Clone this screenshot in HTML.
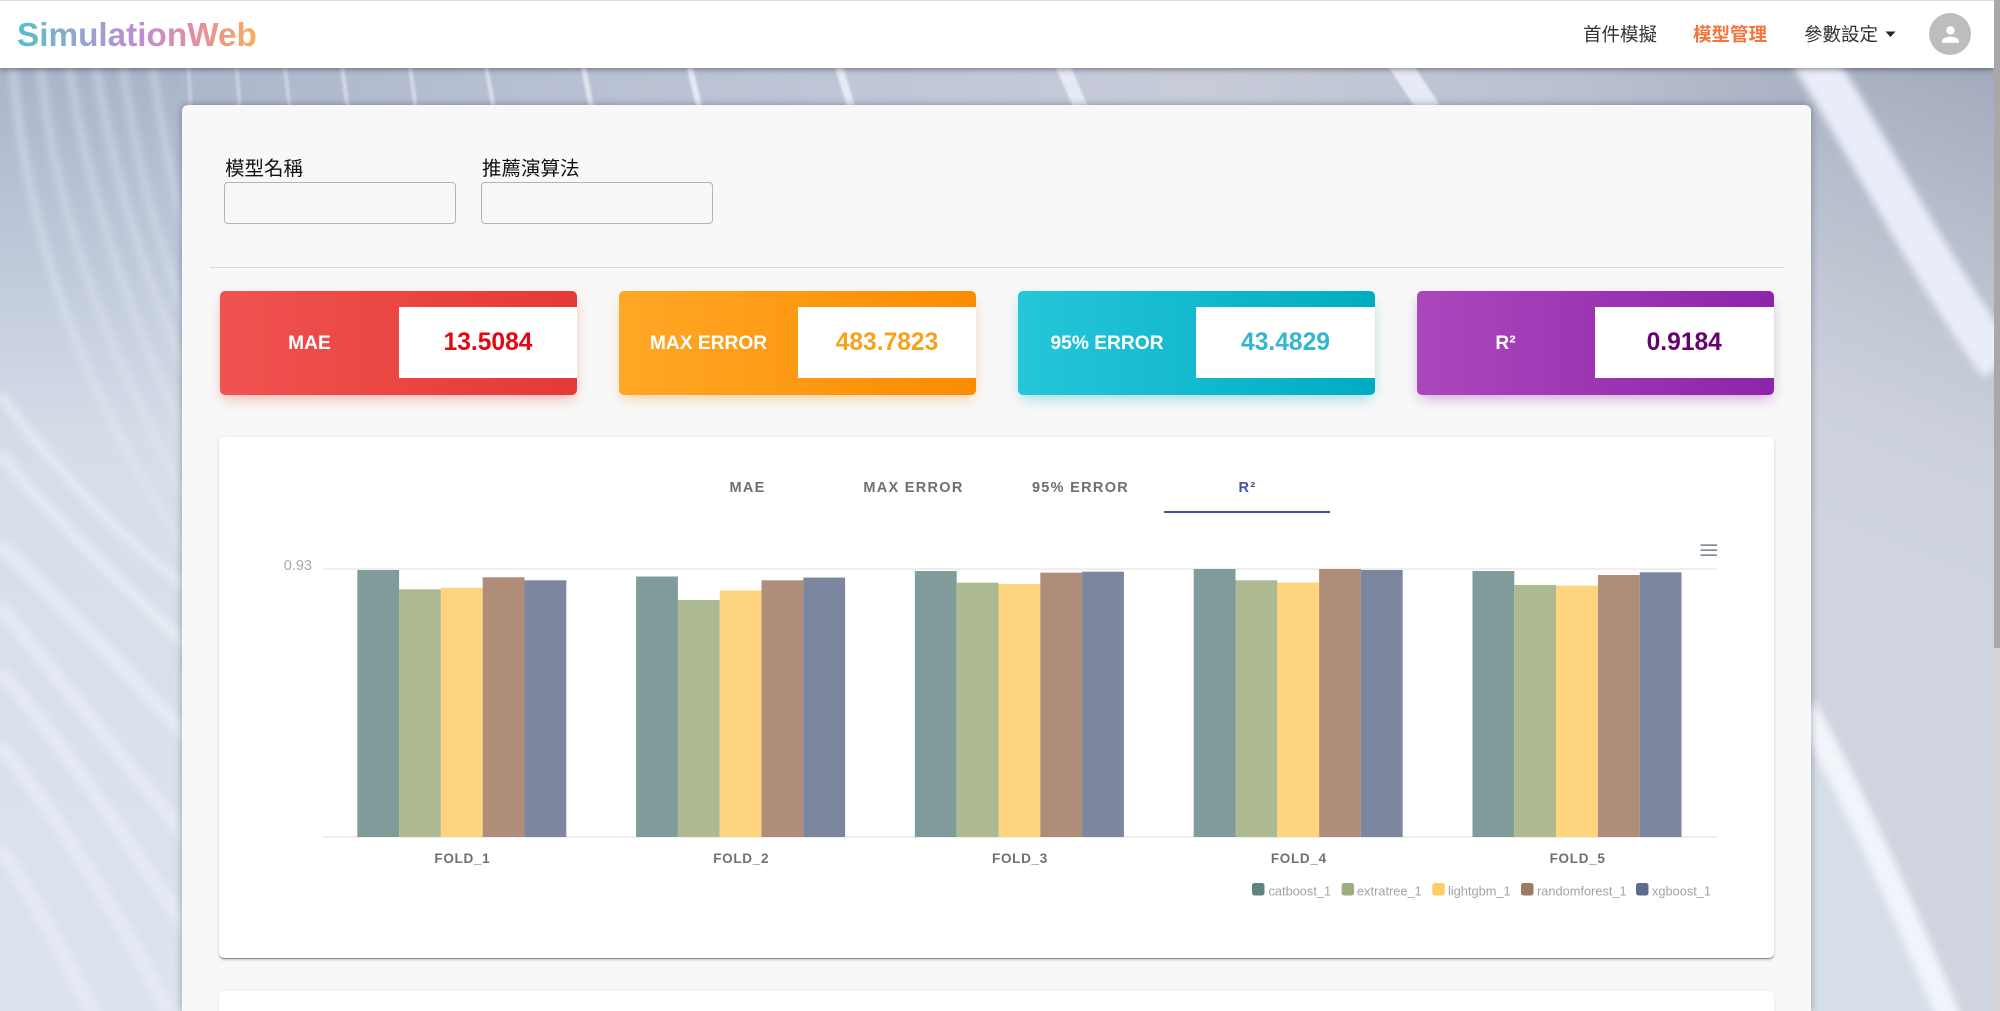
<!DOCTYPE html>
<html lang="zh-Hant">
<head>
<meta charset="utf-8">
<title>SimulationWeb</title>
<style>
html,body{margin:0;padding:0;width:2000px;height:1011px;overflow:hidden;background:#cfd5e0;font-family:"Liberation Sans","Noto Sans CJK TC",sans-serif}
#root{position:absolute;left:0;top:0;width:2000px;height:1011px;overflow:hidden}
#bg{position:absolute;left:0;top:0}
.abs{position:absolute}
.nav{position:absolute;left:0;top:0;width:1994px;height:68px;background:#fff;border-top:1px solid #dcdcdc;box-sizing:border-box;box-shadow:0 1px 6px rgba(0,0,0,.45)}
.logo{position:absolute;left:17px;top:16px;font-size:33.3px;line-height:38px;font-weight:700;white-space:nowrap;background:linear-gradient(90deg,#54bfc7 0%,#8ea9cc 22%,#bb8ed2 50%,#e78d9c 75%,#f6ae5c 100%);-webkit-background-clip:text;background-clip:text;color:transparent}
.ni{position:absolute;top:20px;font-size:18.5px;line-height:28px;color:#333;white-space:nowrap}
.scroll{position:absolute;left:1994px;top:0;width:6px;height:1011px;background:#d6d6d6}
.thumb{position:absolute;left:0;top:0;width:6px;height:648px;background:#a8a8a8}
.main{position:absolute;left:182px;top:105px;width:1629px;height:906px;background:#f8f8f8;border-radius:6px 6px 0 0;box-shadow:0 0 8px rgba(30,35,60,.38)}
.lbl{position:absolute;top:154.5px;font-size:19.5px;line-height:28px;color:#111;white-space:nowrap}
.inp{position:absolute;top:182px;width:232px;height:42px;box-sizing:border-box;border:1px solid #b4b4b4;border-radius:4px;background:#f8f8f8}
.hr{position:absolute;left:210px;top:267px;width:1574px;height:1px;background:#d8d8d8}
.kpi{position:absolute;top:291px;width:357.5px;height:104px;border-radius:5px}
.kpi .w{position:absolute;left:179.5px;top:16px;right:0;height:71px;background:#fff}
.kpi .t{position:absolute;left:0;top:0;width:180px;height:104px;line-height:105px;text-align:center;color:#fff;font-weight:700;font-size:19.2px;white-space:nowrap}
.kpi .v{position:absolute;left:179.5px;top:16px;right:0;height:71px;line-height:72px;text-align:center;font-weight:700;font-size:24.6px}
.panel{position:absolute;left:219px;top:437px;width:1555px;height:521px;background:#fff;border-radius:5px;box-shadow:0 1px 0 rgba(0,0,0,.3),0 2px 3px -1px rgba(0,0,0,.3),0 0 6px rgba(0,0,0,.05)}
.panel2{position:absolute;left:219px;top:991px;width:1555px;height:60px;background:#fff;border-radius:5px;box-shadow:0 0 4px rgba(0,0,0,.06)}
.tab{position:absolute;top:476px;width:167px;text-align:center;font-size:14.5px;line-height:24px;font-weight:700;letter-spacing:1.3px;color:#6f6f6f;white-space:nowrap}
.ul{position:absolute;left:1164px;top:511px;width:166px;height:2px;background:#3f51a5}
#chart{position:absolute;left:0;top:0}
</style>
</head>
<body>
<div id="root">
<svg id="bg" width="2000" height="1011" viewBox="0 0 2000 1011">
<defs>
<linearGradient id="gl" x1="0" y1="60" x2="0" y2="1011" gradientUnits="userSpaceOnUse">
<stop offset="0" stop-color="#a9b3c8"/><stop offset=".18" stop-color="#bcc6d8"/><stop offset=".4" stop-color="#d6dde9"/><stop offset=".6" stop-color="#d9e0ea"/><stop offset="1" stop-color="#dde3ee"/>
</linearGradient>
<linearGradient id="gt" x1="180" y1="0" x2="1820" y2="0" gradientUnits="userSpaceOnUse">
<stop offset="0" stop-color="#aeb7cb"/><stop offset=".4" stop-color="#bfc6d8"/><stop offset=".62" stop-color="#c8ccd9"/><stop offset=".85" stop-color="#bac0d0"/><stop offset="1" stop-color="#aab1c4"/>
</linearGradient>
<linearGradient id="gr" x1="1994" y1="68" x2="1811" y2="520" gradientUnits="userSpaceOnUse">
<stop offset="0" stop-color="#a3aabd"/><stop offset=".4" stop-color="#bac1ce"/><stop offset=".75" stop-color="#ccd1dc"/><stop offset="1" stop-color="#cfd4de"/>
</linearGradient>
<filter id="b2" x="-30%" y="-20%" width="160%" height="140%"><feGaussianBlur stdDeviation="3.5"/></filter>
<filter id="b1" x="-50%" y="-5%" width="200%" height="110%"><feGaussianBlur stdDeviation="1"/></filter>
<filter id="b3" x="-20%" y="-20%" width="140%" height="140%"><feGaussianBlur stdDeviation="4"/></filter>
</defs>
<rect x="0" y="60" width="190" height="951" fill="url(#gl)"/>
<rect x="180" y="60" width="1640" height="60" fill="url(#gt)"/>
<rect x="1805" y="60" width="195" height="951" fill="url(#gr)"/>
<polygon points="1805,715 1945,1011 1805,1011" fill="#d6dee8"/>
<g fill="none" stroke="#e4eaf4" filter="url(#b2)">
<path d="M12 60 C24 200 60 360 190 556" stroke-width="9" stroke-opacity=".4"/>
<path d="M40 60 C52 190 90 320 190 505" stroke-width="9" stroke-opacity=".35"/>
<path d="M68 60 C84 170 120 300 190 445" stroke-width="9" stroke-opacity=".35"/>
<path d="M95 60 C110 160 140 270 190 378" stroke-width="9" stroke-opacity=".35"/>
<path d="M122 60 C134 150 155 240 190 325" stroke-width="8" stroke-opacity=".35"/>
<path d="M152 60 C160 120 172 190 190 245" stroke-width="7" stroke-opacity=".4"/>
<path d="M0 395 C40 450 110 530 190 590" stroke="#eef2fa" stroke-width="10" stroke-opacity=".55"/>
<path d="M0 454 C50 515 117 581 190 648" stroke="#edf1f9" stroke-width="12" stroke-opacity=".6"/>
<path d="M0 545 C50 594 117 660 190 740" stroke="#eaeff8" stroke-width="15" stroke-opacity=".7"/>
<path d="M0 606 C67 690 133 770 190 842" stroke="#e8edf7" stroke-width="15" stroke-opacity=".7"/>
<path d="M0 672 C50 727 117 824 190 934" stroke="#e8edf7" stroke-width="15" stroke-opacity=".7"/>
<path d="M0 745 C50 806 117 909 170 1015" stroke="#e8edf7" stroke-width="15" stroke-opacity=".7"/>
<path d="M0 848 C30 890 60 950 95 1015" stroke="#e8edf7" stroke-width="15" stroke-opacity=".7"/>
</g>
<g stroke="#e6eaf4" fill="none" filter="url(#b1)">
<line x1="188" y1="60" x2="191" y2="110" stroke-width="4" stroke-opacity=".4"/>
<line x1="236" y1="60" x2="240" y2="110" stroke-width="4" stroke-opacity=".45"/>
<line x1="284" y1="60" x2="290" y2="110" stroke-width="4" stroke-opacity=".5"/>
<line x1="341" y1="60" x2="348" y2="110" stroke-width="4" stroke-opacity=".65"/>
<line x1="409" y1="60" x2="416" y2="110" stroke-width="4" stroke-opacity=".65"/>
<line x1="485" y1="60" x2="494" y2="110" stroke-width="4" stroke-opacity=".75"/>
<line x1="582" y1="60" x2="592" y2="110" stroke-width="5" stroke-opacity=".9"/>
<line x1="688" y1="60" x2="700" y2="110" stroke-width="6"/>
<line x1="837" y1="60" x2="852" y2="110" stroke-width="8"/>
<line x1="1060" y1="60" x2="1082" y2="110" stroke-width="14"/>
<line x1="1397" y1="60" x2="1430" y2="110" stroke-width="22"/>
</g>
<g fill="none" filter="url(#b3)">
<path d="M1810 55 C1860 130 1930 270 2000 365" stroke="#e9edf8" stroke-width="42"/>
<path d="M1805 708 C1850 790 1900 900 1950 1020" stroke="#f2f4fa" stroke-width="24"/>
</g>
</svg>

<div class="main"></div>
<div class="lbl" style="left:225px">模型名稱</div>
<div class="lbl" style="left:482px">推薦演算法</div>
<div class="inp" style="left:224px"></div>
<div class="inp" style="left:481px"></div>
<div class="hr"></div>

<div class="kpi" style="left:219.5px;background:linear-gradient(90deg,#ef5350,#e53935);box-shadow:0 6px 14px -3px rgba(229,57,53,.4)">
<div class="w"></div><div class="t">MAE</div><div class="v" style="color:#e30613">13.5084</div></div>
<div class="kpi" style="left:619px;width:357px;background:linear-gradient(90deg,#ffa726,#fb8c00);box-shadow:0 6px 14px -3px rgba(251,140,0,.4)">
<div class="w" style="left:179px"></div><div class="t" style="width:179px">MAX ERROR</div><div class="v" style="left:179px;color:#f7a21e">483.7823</div></div>
<div class="kpi" style="left:1018px;width:357px;background:linear-gradient(90deg,#26c6da,#00acc1);box-shadow:0 6px 14px -3px rgba(0,172,193,.4)">
<div class="w" style="left:178px"></div><div class="t" style="width:178px">95% ERROR</div><div class="v" style="left:178px;color:#33b6d2">43.4829</div></div>
<div class="kpi" style="left:1416.5px;background:linear-gradient(90deg,#ab47bc,#8e24aa);box-shadow:0 6px 14px -3px rgba(142,36,170,.4)">
<div class="w" style="left:178px"></div><div class="t" style="width:178px">R²</div><div class="v" style="left:178px;color:#68006e">0.9184</div></div>

<div class="panel"></div>
<div class="panel2"></div>
<div class="tab" style="left:664px">MAE</div>
<div class="tab" style="left:830px">MAX ERROR</div>
<div class="tab" style="left:997px">95% ERROR</div>
<div class="tab" style="left:1164px;color:#3f51a5">R²</div>
<div class="ul"></div>

<svg id="chart" width="2000" height="1011" viewBox="0 0 2000 1011" style="font-family:'Liberation Sans',sans-serif">
<line x1="323" y1="569" x2="1717" y2="569" stroke="#e8e8e8" stroke-width="1.4"/>
<line x1="323" y1="837" x2="1717" y2="837" stroke="#e8e8e8" stroke-width="1.4"/>
<text x="312" y="570" text-anchor="end" font-size="14.500" fill="#a8a8a8">0.93</text>
<g fill="#7f9c9a">
<rect x="357.3" y="570" width="41.8" height="267"/>
<rect x="636.1" y="576.5" width="41.8" height="260.5"/>
<rect x="914.9" y="571" width="41.8" height="266"/>
<rect x="1193.7" y="569" width="41.8" height="268"/>
<rect x="1472.5" y="571" width="41.8" height="266"/>
</g>
<g fill="#adba91">
<rect x="399.1" y="589.3" width="41.8" height="247.7"/>
<rect x="677.9" y="600" width="41.8" height="237"/>
<rect x="956.7" y="582.7" width="41.8" height="254.3"/>
<rect x="1235.5" y="580.3" width="41.8" height="256.7"/>
<rect x="1514.3" y="585" width="41.8" height="252"/>
</g>
<g fill="#fed57e">
<rect x="440.9" y="587.7" width="41.8" height="249.3"/>
<rect x="719.7" y="590.5" width="41.8" height="246.5"/>
<rect x="998.5" y="584" width="41.8" height="253"/>
<rect x="1277.3" y="582.5" width="41.8" height="254.5"/>
<rect x="1556.1" y="585.7" width="41.8" height="251.3"/>
</g>
<g fill="#b08d78">
<rect x="482.7" y="577.3" width="41.8" height="259.7"/>
<rect x="761.5" y="580.3" width="41.8" height="256.7"/>
<rect x="1040.3" y="572.7" width="41.8" height="264.3"/>
<rect x="1319.1" y="569" width="41.8" height="268"/>
<rect x="1597.9" y="575" width="41.8" height="262"/>
</g>
<g fill="#7c869e">
<rect x="524.5" y="580.3" width="41.8" height="256.7"/>
<rect x="803.3" y="577.6" width="41.8" height="259.4"/>
<rect x="1082.1" y="571.7" width="41.8" height="265.3"/>
<rect x="1360.9" y="570" width="41.8" height="267"/>
<rect x="1639.7" y="572.3" width="41.8" height="264.7"/>
</g>
<g font-size="13.500" font-weight="700" fill="#707070" text-anchor="middle" letter-spacing=".7">
<text x="462.400" y="863">FOLD_1</text>
<text x="741.200" y="863">FOLD_2</text>
<text x="1020" y="863">FOLD_3</text>
<text x="1298.800" y="863">FOLD_4</text>
<text x="1577.600" y="863">FOLD_5</text>
</g>
<g>
<rect x="1252" y="883" width="12.5" height="12.5" rx="2.5" fill="#5f8583"/>
<rect x="1341.6" y="883" width="12.5" height="12.5" rx="2.5" fill="#9bae80"/>
<rect x="1432.3" y="883" width="12.5" height="12.5" rx="2.5" fill="#fdcd66"/>
<rect x="1521" y="883" width="12.5" height="12.5" rx="2.5" fill="#9f7a60"/>
<rect x="1636" y="883" width="12.5" height="12.5" rx="2.5" fill="#5f6b8b"/>
</g>
<g font-size="12.8" fill="#a3a3a3">
<text x="1268.5" y="895.5">catboost_1</text>
<text x="1357" y="895.5">extratree_1</text>
<text x="1448" y="895.5">lightgbm_1</text>
<text x="1537" y="895.5">randomforest_1</text>
<text x="1652" y="895.5">xgboost_1</text>
</g>
<g fill="#7f8e9c">
<rect x="1700.5" y="544.300" width="16.5" height="1.700"/>
<rect x="1700.5" y="549.300" width="16.5" height="1.700"/>
<rect x="1700.5" y="554.300" width="16.5" height="1.700"/>
</g>
</svg>

<div class="nav">
<div class="logo">SimulationWeb</div>
<div class="ni" style="left:1583px">首件模擬</div>
<div class="ni" style="left:1693px;color:#f4743b;font-weight:700">模型管理</div>
<div class="ni" style="left:1804px">參數設定</div>
<svg class="abs" style="left:1885px;top:30px" width="11" height="7" viewBox="0 0 11 7"><path d="M0.500 0.500H10.500L5.500 6Z" fill="#222"/></svg>
<div class="abs" style="left:1929px;top:12px;width:42px;height:42px;border-radius:50%;background:#bdbdbd"></div>
<svg class="abs" style="left:1937.500px;top:20.500px" width="25" height="25" viewBox="0 0 24 24"><path fill="#fff" d="M12 12c2.210 0 4-1.790 4-4s-1.790-4-4-4-4 1.790-4 4 1.790 4 4 4zm0 2c-2.670 0-8 1.340-8 4v2h16v-2c0-2.660-5.330-4-8-4z"/></svg>
</div>
<div class="scroll"><div class="thumb"></div></div>
</div>
</body>
</html>
